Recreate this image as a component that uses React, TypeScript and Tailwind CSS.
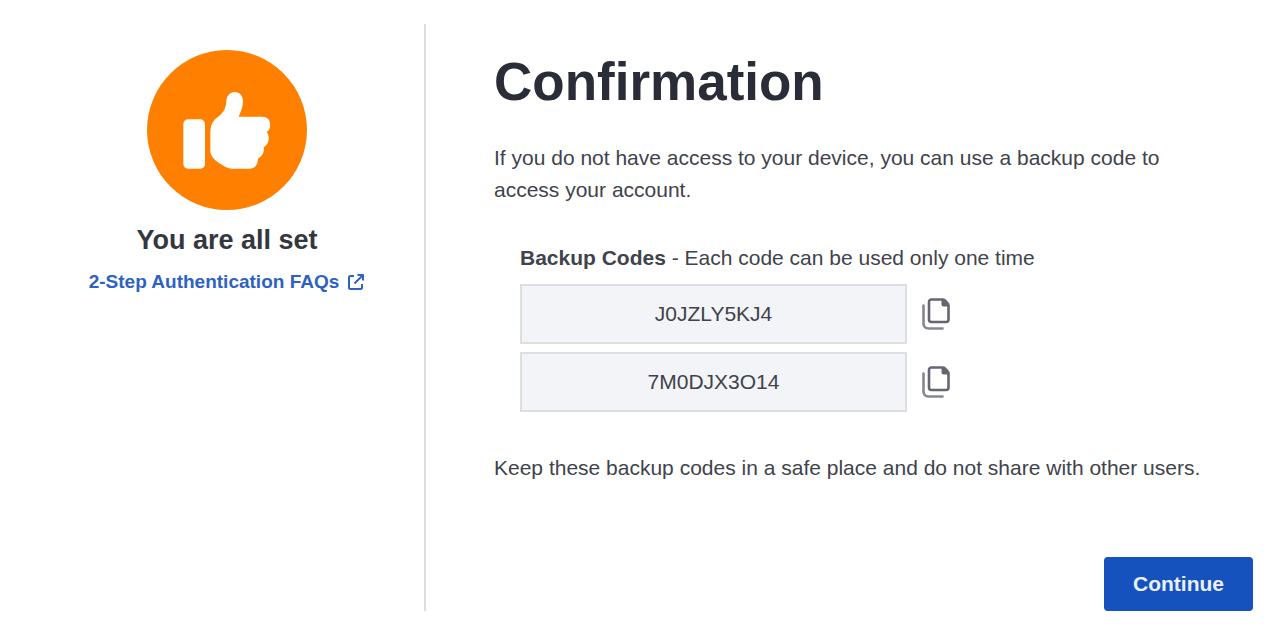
import React from 'react';

const backupCodes = ['J0JZLY5KJ4', '7M0DJX3O14'];

const ThumbsUpBadge: React.FC = () => (
  <svg viewBox="0 0 480 480" className="w-40 h-40" aria-hidden="true">
    <circle cx="240" cy="240" r="240" fill="#ff8000" />
    <g fill="#fff">
      <rect x="109" y="208" width="65" height="148" rx="14" />
      <path d="M190 250C190 220 201 209 216 198C230 187 237 172 238 155C239 137 249 126 263 126C279 126 288 138 288 154C288 172 281 186 275 200H346C360 200 369 209 369 220C371 232 368 240 359 246C368 256 369 280 350 292C353 306 346 318 333 326C333 336 328 356 310 356H254C244 356 235 351 226 345C208 334 190 322 190 302Z" />
    </g>
  </svg>
);

const ExternalLinkIcon: React.FC = () => (
  <svg
    viewBox="0 0 18 18"
    className="w-[18px] h-[18px]"
    fill="none"
    stroke="currentColor"
    strokeWidth="2"
    strokeLinejoin="round"
    aria-hidden="true"
  >
    <path d="M7 3H3.500C2.600 3 2 3.600 2 4.500V14.500C2 15.400 2.600 16 3.500 16H13.500C14.400 16 15 15.400 15 14.500V11" />
    <path d="M10.500 2H16V7.500M16 2L7.500 10.500" />
  </svg>
);

const CopyIcon: React.FC = () => (
  <svg viewBox="0 0 30 34" className="w-[30px] h-[34px]" fill="none" aria-hidden="true">
    <path
      d="M10.500 2.500H21.500C22.500 2.500 23.200 2.800 23.900 3.500L26.600 6.300C27.200 7 27.500 7.700 27.500 8.600V22.500C27.500 24 26.500 25 25 25H10.500C9 25 8 24 8 22.500V5C8 3.500 9 2.500 10.500 2.500Z"
      stroke="#656673"
      strokeWidth="2.600"
      strokeLinejoin="round"
    />
    <path d="M20.500 2.500V7.500C20.500 8.600 21.400 9.500 22.500 9.500H27.500L27 6.500L23.500 3Z" fill="#656673" />
    <path
      d="M2.500 8.500V26.500C2.500 29.500 4.500 31.500 7.500 31.500H21.500"
      stroke="#858691"
      strokeWidth="2.600"
      strokeLinecap="round"
    />
  </svg>
);

const App: React.FC = () => {
  const handleCopy = (code: string) => {
    navigator.clipboard?.writeText(code);
  };

  return (
    <div className="min-h-screen flex py-6 bg-white text-[#40434b] font-['Liberation_Sans',Arial,sans-serif]">
      <aside className="w-1/3 flex flex-col items-center border-r-2 border-[#dcdde4] pt-[26px] pl-[30px]">
        <ThumbsUpBadge />
        <h2 className="mt-3 text-[27px] leading-9 font-bold text-[#35373f]">You are all set</h2>
        <a
          href="#faqs"
          className="mt-3 flex items-center gap-2 text-[19px] leading-6 font-bold text-[#2d62c4]"
        >
          2-Step Authentication FAQs
          <ExternalLinkIcon />
        </a>
      </aside>

      <main className="flex-1 flex flex-col items-start pl-[68px] pr-[25px]">
        <h1 className="mt-7 text-[53px] leading-[60px] font-bold text-[#2a2d38]">Confirmation</h1>
        <p className="mt-[30px] max-w-[720px] text-[21px] leading-8">
          If you do not have access to your device, you can use a backup code to access your account.
        </p>

        <section className="mt-9 ml-[26px]">
          <p className="text-[21px] leading-8">
            <strong>Backup Codes</strong> - Each code can be used only one time
          </p>
          <ul className="mt-2.5 flex flex-col gap-2">
            {backupCodes.map((code) => (
              <li key={code} className="flex items-center gap-3.5">
                <span className="w-[387px] h-[60px] flex items-center justify-center border-2 border-[#dcdee4] bg-[#f3f4f7] text-[21px]">
                  {code}
                </span>
                <button type="button" aria-label={`Copy ${code}`} onClick={() => handleCopy(code)}>
                  <CopyIcon />
                </button>
              </li>
            ))}
          </ul>
        </section>

        <p className="mt-10 text-[21px] leading-8">
          Keep these backup codes in a safe place and do not share with other users.
        </p>

        <button
          type="button"
          className="mt-auto self-end rounded bg-[#1552bd] px-[29px] py-[11px] text-[21px] leading-8 font-bold text-[#eaf0fc]"
        >
          Continue
        </button>
      </main>
    </div>
  );
};

export default App;
